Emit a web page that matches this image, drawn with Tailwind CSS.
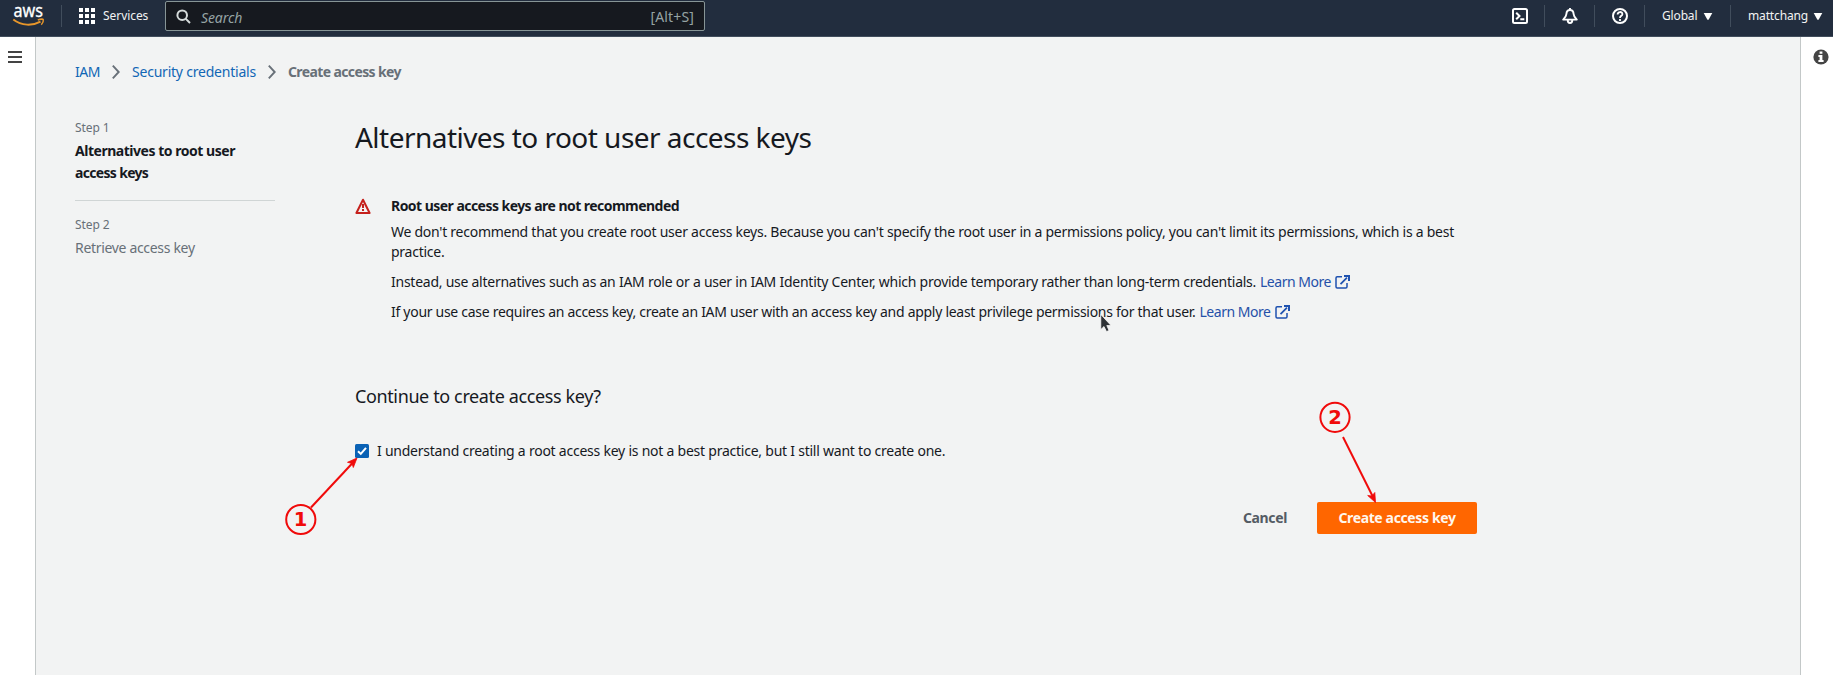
<!DOCTYPE html>
<html lang="en">
<head>
<meta charset="utf-8">
<title>Create access key</title>
<script src="https://cdn.jsdelivr.net/npm/@tailwindcss/browser@4"></script>
</head>
<body class="relative flex h-[675px] w-[1833px] flex-col overflow-hidden bg-[#f2f3f3] font-['Noto_Sans',sans-serif] text-[14px] leading-5 text-[#16191f]">

<!-- Top navigation -->
<header class="flex h-[37px] shrink-0 items-start border-b border-[#414d5c] bg-[#222d3e] text-[12px] text-[#f2f3f3]">
  <svg class="mt-0 ml-[12px] h-7 w-[33px] shrink-0 overflow-visible" viewBox="0 -4 33 28">
    <text x="1.5" y="13" font-size="17.5" textLength="29.5" lengthAdjust="spacingAndGlyphs" fill="#fff" stroke="#fff" stroke-width=".3">aws</text>
    <path d="M1.3 15.6C9.5 22 20.500 22 28.500 17.600" fill="none" stroke="#e8962a" stroke-width="1.900"/>
    <path d="M25.800 16C28.500 15 31 15 31.300 15.700C31.500 17 30.700 19.400 29.300 20.800" fill="none" stroke="#e8962a" stroke-width="1.500"/>
  </svg>
  <div class="mt-[5px] ml-4 h-[22px] w-px bg-[#414d5c]"></div>
  <svg class="mt-2 ml-[17px] size-4" viewBox="0 0 16 16" fill="#fff">
    <path d="M0 0h4v4H0zM6 0h4v4H6zM12 0h4v4h-4zM0 6h4v4H0zM6 6h4v4H6zM12 6h4v4h-4zM0 12h4v4H0zM6 12h4v4H6zM12 12h4v4h-4z"/>
  </svg>
  <span class="mt-[6px] ml-2 w-[62px] tracking-[-0.06px]">Services</span>
  <div class="mt-px flex h-[30px] w-[540px] items-center rounded-[2px] border border-[#879596] bg-[#16191f] px-[10px] text-[14px] text-[#95a3a4]">
    <svg class="mr-[10px] size-[15px]" viewBox="0 0 15 15" fill="none" stroke="#d5dbdb" stroke-width="2"><circle cx="6.200" cy="6.200" r="4.800"/><path d="M9.600 9.600L14 14"/></svg>
    <span class="mt-[3px] grow tracking-[-0.1px] italic">Search</span>
    <span class="mt-[2px] tracking-[0.15px]">[Alt+S]</span>
  </div>
  <div class="grow"></div>
  <svg class="mt-2 size-4" viewBox="0 0 16 16" fill="none" stroke="#fff" stroke-width="2"><rect x="1" y="1" width="14" height="14" rx="1.500"/><path d="M4.200 4.700L7.500 8L4.200 11.300M8.300 11.300h4"/></svg>
  <div class="mt-[5px] ml-4 h-[22px] w-px bg-[#414d5c]"></div>
  <svg class="mt-2 ml-[17px] size-4" viewBox="0 0 16 16" fill="none" stroke="#fff" stroke-width="1.900" stroke-linejoin="round"><path d="M8 0v2M8 2C5.500 2 4.500 4 4.400 6C4.300 8.500 3.300 9.500 1.200 11.600H14.800C12.700 9.500 11.700 8.500 11.600 6C11.500 4 10.500 2 8 2ZM5.700 12c0 4 4.600 4 4.600 0"/></svg>
  <div class="mt-[5px] ml-4 h-[22px] w-px bg-[#414d5c]"></div>
  <svg class="mt-2 ml-[17px] size-4" viewBox="0 0 16 16" fill="none" stroke="#fff" stroke-width="2"><circle cx="8" cy="8" r="7"/><path d="M5.600 6.500C5.600 3.200 10.500 3.300 10.400 6.200C10.300 7.800 8 7.900 8 9.900M8 11v1.900" stroke-width="1.800"/></svg>
  <div class="mt-[5px] ml-4 h-[22px] w-px bg-[#414d5c]"></div>
  <span class="mt-[6px] ml-[17px] w-[42px] tracking-[-0.15px]">Global</span>
  <svg class="mt-[13px] h-[7px] w-2 overflow-visible" viewBox="0 0 8 7"><path d="M-.3 0h8.600L4.600 6.800H3.400z" fill="#fff"/></svg>
  <div class="mt-[5px] ml-[18px] h-[22px] w-px bg-[#414d5c]"></div>
  <span class="mt-[6px] ml-[17px] w-[66px] tracking-[-0.15px]">mattchang</span>
  <svg class="mt-[13px] mr-[11px] h-[7px] w-2 overflow-visible" viewBox="0 0 8 7"><path d="M-.3 0h8.600L4.600 6.800H3.400z" fill="#fff"/></svg>
</header>

<div class="flex grow">
  <!-- Collapsed navigation -->
  <aside class="w-9 shrink-0 border-r border-[#c3c8c8] bg-white pt-[14px] pl-2">
    <svg class="h-3 w-[14px]" viewBox="0 0 14 12"><path d="M0 1h14M0 6h14M0 11h14" stroke="#444" stroke-width="2.200"/></svg>
  </aside>

  <main class="grow pt-[25px] pl-[39px]">
    <nav class="flex h-5 items-center text-[#1166b5]">
      <a class="w-[37px] tracking-[-0.5px]">IAM</a>
      <svg class="mr-[12px] h-[14px] w-2" viewBox="0 0 8 14" fill="none" stroke="#687078" stroke-width="1.900"><path d="M.8.700L6.700 7L.8 13.300"/></svg>
      <a class="w-[136px] tracking-[-0.22px]">Security credentials</a>
      <svg class="mr-[12px] h-[14px] w-2" viewBox="0 0 8 14" fill="none" stroke="#687078" stroke-width="1.900"><path d="M.8.700L6.700 7L.8 13.300"/></svg>
      <span class="font-bold tracking-[-0.62px] text-[#687078]">Create access key</span>
    </nav>

    <div class="flex">
      <ol class="mt-[37px] w-[200px] shrink-0">
        <li class="border-b border-[#d0d5d5] pb-4">
          <div class="text-[12px] leading-[18px] tracking-[-0.1px] text-[#687078]">Step 1</div>
          <div class="mt-[3px] leading-[22px] font-bold tracking-[-0.47px]">Alternatives to root user<br><span class="tracking-[-0.68px]">access keys</span></div>
        </li>
        <li class="pt-[15px] text-[#687078]">
          <div class="text-[12px] leading-[18px] tracking-[-0.1px]">Step 2</div>
          <div class="mt-[3px] leading-[22px] tracking-[-0.32px]">Retrieve access key</div>
        </li>
      </ol>

      <section class="mt-[37px] ml-[80px] w-[1122px]">
        <h1 class="text-[28px] leading-9 tracking-[-0.53px] whitespace-nowrap">Alternatives to root user access keys</h1>

        <div class="mt-[41px] flex">
          <svg class="mt-[2px] mr-5 size-4 shrink-0" viewBox="0 0 16 16" fill="none" stroke="#c5201c" stroke-width="2"><path d="M8 1.700L14.600 15H1.400Z" stroke-linejoin="round"/><path d="M8 6v4M8 11v2"/></svg>
          <div class="whitespace-nowrap">
            <h2 class="font-bold tracking-[-0.54px]">Root user access keys are not recommended</h2>
            <p class="mt-[6px] tracking-[-0.26px]">We don't recommend that you create root user access keys. Because you can't specify the root user in a permissions policy, you can't limit its permissions, which is a best<br>practice.</p>
            <p class="mt-[10px] flex"><span class="w-[869px] tracking-[-0.253px]">Instead, use alternatives such as an IAM role or a user in IAM Identity Center, which provide temporary rather than long-term credentials.</span><a class="flex tracking-[-0.47px] text-[#2550a8]">Learn More
              <svg class="mt-[3px] ml-1 size-[15px]" viewBox="0 0 15 15" fill="none" stroke="#1f52b0" stroke-width="1.500"><path d="M7 1.800H2.200Q1 1.800 1 3V11.800Q1 13 2.200 13H10.800Q12 13 12 11.800V8"/><path d="M5.500 9.200L12 2.700" stroke-width="1.700"/><path d="M9 1H14V6" stroke-width="2"/></svg></a></p>
            <p class="mt-[10px] flex"><span class="w-[808.500px] tracking-[-0.287px]">If your use case requires an access key, create an IAM user with an access key and apply least privilege permissions for that user.</span><a class="flex tracking-[-0.47px] text-[#2550a8]">Learn More
              <svg class="mt-[3px] ml-1 size-[15px]" viewBox="0 0 15 15" fill="none" stroke="#1f52b0" stroke-width="1.500"><path d="M7 1.800H2.200Q1 1.800 1 3V11.800Q1 13 2.200 13H10.800Q12 13 12 11.800V8"/><path d="M5.500 9.200L12 2.700" stroke-width="1.700"/><path d="M9 1H14V6" stroke-width="2"/></svg></a></p>
          </div>
        </div>

        <h2 class="mt-[63px] text-[18px] leading-[22px] tracking-[-0.38px]">Continue to create access key?</h2>

        <label class="mt-[34px] flex">
          <svg class="mt-[3px] mr-2 size-[14px]" viewBox="0 0 14 14"><rect width="14" height="14" rx="1.500" fill="#0a62b5"/><path d="M3 7.200L5.800 9.900L11 3.800" fill="none" stroke="#fff" stroke-width="2"/></svg>
          <span class="tracking-[-0.235px] whitespace-nowrap">I understand creating a root access key is not a best practice, but I still want to create one.</span>
        </label>

        <div class="mt-[41px] flex h-8 items-center justify-end font-bold tracking-[-0.37px]">
          <button class="mr-[30px] text-[#545b64]">Cancel</button>
          <button class="h-8 w-[160px] rounded-[2px] bg-[#ff6600] text-[#fff7ee]">Create access key</button>
        </div>
      </section>
    </div>
  </main>

  <!-- Collapsed help panel -->
  <aside class="w-[33px] shrink-0 border-l border-[#c3c8c8] bg-white pt-3 pl-[12px]">
    <svg class="size-4" viewBox="0 0 16 16"><circle cx="8" cy="8" r="7.600" fill="#444"/><path d="M6.600 2.500h2.800v2.300H6.600zM5.400 6h4v5h1.200v2H5.400v-2h1.200V8H5.400z" fill="#fff"/></svg>
  </aside>
</div>

<!-- Annotations and mouse pointer -->
<svg class="pointer-events-none absolute inset-0 h-[675px] w-[1833px]" viewBox="0 0 1833 675">
  <g fill="none" stroke="#f00a0a" stroke-width="2">
    <circle cx="300.800" cy="519.500" r="14.600"/>
    <path d="M311 507.500L353.500 462"/>
    <circle cx="1335" cy="417.300" r="14.600"/>
    <path d="M1343 437L1372.500 496"/>
  </g>
  <path d="M357 458L353.300 467.500L352 463.500L347.500 462.300ZM1375.500 502.500L1367.700 495.500L1372 496L1374.800 492.500Z" fill="#f00a0a" stroke="#f00a0a" stroke-width=".8"/>
  <g fill="#f00a0a" font-family="DejaVu Sans, sans-serif" font-size="19.500" font-weight="700" text-anchor="middle">
    <text x="300.500" y="526">1</text>
    <text x="1335" y="424">2</text>
  </g>
  <path d="M1100.800 314.500V329.500L1104 326.500L1106.500 331.500L1109 330.500L1106.800 325.500H1111Z" fill="#2e3236" stroke="#fff" stroke-width=".7"/>
</svg>
</body>
</html>
